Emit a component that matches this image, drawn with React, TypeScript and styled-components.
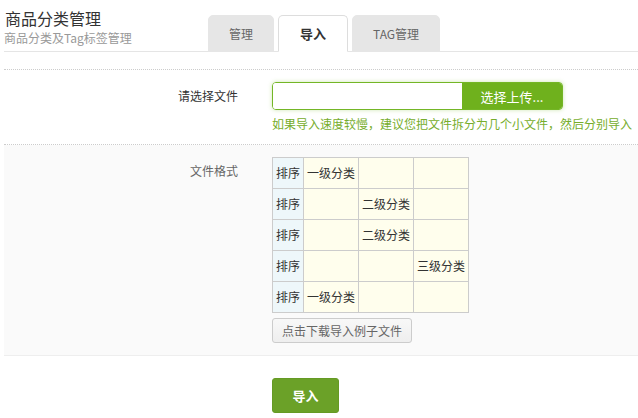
import React from "react";
import styled, { createGlobalStyle } from "styled-components";

const Global = createGlobalStyle`
  html, body { margin: 0; padding: 0; background: #fff; }
  body { font-family: "Noto Sans CJK SC", "Noto Sans", sans-serif; font-size: 12px; color: #333; }
  * { box-sizing: border-box; }
`;

const Page = styled.div`
  margin-left: 4px;
`;

const Header = styled.div`
  display: flex;
  align-items: flex-end;
  height: 52px;
  border-bottom: 1px solid #e5e5e5;
`;

const TitleBlock = styled.div`
  width: 204px;
  align-self: flex-start;
  padding-top: 7px;
`;

const Title = styled.div`
  font-size: 16px;
  line-height: 22px;
  color: #333;
  padding-left: 1px;
`;

const Subtitle = styled.div`
  font-size: 12px;
  line-height: 16px;
  color: #999;
  margin-top: 1px;
`;

const Tabs = styled.div`
  display: flex;
  align-items: flex-end;
  gap: 4px;
  margin-bottom: -1px;
`;

const Tab = styled.div<{ $active?: boolean }>`
  height: 37px;
  padding: 0 ${(p) => (p.$active ? 21 : 20)}px;
  display: flex;
  align-items: center;
  justify-content: center;
  border-radius: 5px 5px 0 0;
  font-size: ${(p) => (p.$active ? 13 : 12)}px;
  font-weight: ${(p) => (p.$active ? 700 : 400)};
  color: ${(p) => (p.$active ? "#333" : "#666")};
  background: ${(p) => (p.$active ? "#fff" : "#e6e6e6")};
  border: 1px solid ${(p) => (p.$active ? "#ddd" : "#e6e6e6")};
  border-bottom-color: ${(p) => (p.$active ? "#fff" : "#e6e6e6")};
`;

const FormArea = styled.div`
  margin-top: 17px;
  border-top: 1px dotted #ccc;
`;

const Row = styled.div<{ $shaded?: boolean; $border?: string }>`
  display: grid;
  grid-template-columns: 234px 1fr;
  column-gap: 34px;
  padding: 12px 0 12px;
  background: ${(p) => (p.$shaded ? "#fafafa" : "#fff")};
  border-bottom: ${(p) => p.$border || "none"};
`;

const Label = styled.div<{ $muted?: boolean }>`
  text-align: right;
  font-size: 12px;
  line-height: 16px;
  color: ${(p) => (p.$muted ? "#666" : "#333")};
  padding-top: 6px;
`;

const Field = styled.div`
  display: flex;
  flex-direction: column;
  align-items: flex-start;
`;

const UploadBox = styled.div`
  display: flex;
  width: 291px;
  height: 28px;
  border: 1px solid #74b626;
  border-radius: 4px;
  overflow: hidden;
  box-shadow: 0 0 4px rgba(116, 182, 38, 0.35);
`;

const FileInput = styled.div`
  flex: 1;
  background: #fff;
`;

const UploadButton = styled.div`
  width: 100px;
  background: #6fb11d;
  color: #fff;
  font-size: 13px;
  display: flex;
  align-items: center;
  justify-content: center;
`;

const Hint = styled.div`
  margin-top: 6px;
  color: #76ad2c;
  font-size: 12px;
  line-height: 16px;
`;

const FormatTable = styled.table`
  border-collapse: collapse;
  font-size: 12px;
  color: #333;
`;

const Cell = styled.td<{ $head?: boolean }>`
  border: 1px solid #ccc;
  height: 31px;
  width: ${(p) => (p.$head ? 31 : 55)}px;
  padding: 0 3px;
  background: ${(p) => (p.$head ? "#eef7fa" : "#fffeed")};
  white-space: nowrap;
  line-height: 16px;
`;

const DownloadButton = styled.div`
  margin-top: 5px;
  height: 25px;
  padding: 0 9px;
  display: flex;
  align-items: center;
  border: 1px solid #ccc;
  border-radius: 3px;
  background: linear-gradient(#f8f8f8, #eeeeee);
  color: #666;
  font-size: 12px;
`;

const Actions = styled.div`
  padding: 22px 0 0 268px;
`;

const SubmitButton = styled.div`
  width: 67px;
  height: 35px;
  display: flex;
  align-items: center;
  justify-content: center;
  background: #6ba128;
  border: 1px solid #659a24;
  border-radius: 3px;
  color: #fff;
  font-size: 13px;
  font-weight: 700;
`;

const rows: string[][] = [
  ["一级分类", "", ""],
  ["", "二级分类", ""],
  ["", "二级分类", ""],
  ["", "", "三级分类"],
  ["一级分类", "", ""],
];

export default function App() {
  return (
    <Page>
      <Global />
      <Header>
        <TitleBlock>
          <Title>商品分类管理</Title>
          <Subtitle>商品分类及Tag标签管理</Subtitle>
        </TitleBlock>
        <Tabs>
          <Tab>管理</Tab>
          <Tab $active>导入</Tab>
          <Tab>TAG管理</Tab>
        </Tabs>
      </Header>
      <FormArea>
        <Row $border="1px dotted #ccc">
          <Label>请选择文件</Label>
          <Field>
            <UploadBox>
              <FileInput />
              <UploadButton>选择上传...</UploadButton>
            </UploadBox>
            <Hint>如果导入速度较慢，建议您把文件拆分为几个小文件，然后分别导入</Hint>
          </Field>
        </Row>
        <Row $shaded $border="1px solid #eee">
          <Label $muted>文件格式</Label>
          <Field>
            <FormatTable>
              <tbody>
                {rows.map((r, i) => (
                  <tr key={i}>
                    <Cell $head>排序</Cell>
                    {r.map((c, j) => (
                      <Cell key={j}>{c}</Cell>
                    ))}
                  </tr>
                ))}
              </tbody>
            </FormatTable>
            <DownloadButton>点击下载导入例子文件</DownloadButton>
          </Field>
        </Row>
      </FormArea>
      <Actions>
        <SubmitButton>导入</SubmitButton>
      </Actions>
    </Page>
  );
}
